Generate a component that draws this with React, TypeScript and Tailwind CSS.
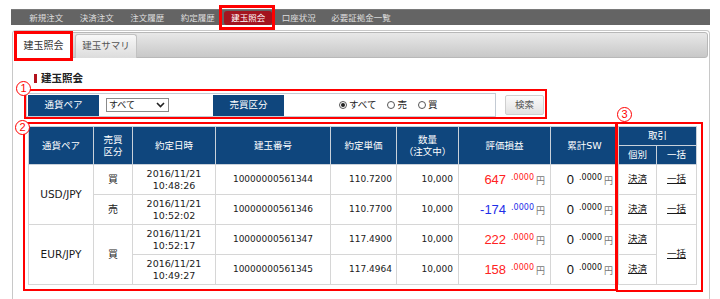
const navItems = ['新規注文', '決済注文', '注文履歴', '約定履歴', '建玉照会', '口座状況', '必要証拠金一覧'];

type Row = {
  pair?: string;
  pairSpan?: number;
  side?: string;
  sideSpan?: number;
  time: string;
  id: string;
  price: string;
  pl: string;
  plColor: string;
  bulk?: boolean;
  bulkSpan?: number;
};

const rows: Row[] = [
  { pair: 'USD/JPY', pairSpan: 2, side: '買', time: '10:48:26', id: '10000000561344', price: '110.7200', pl: '647', plColor: 'text-[#ff2222]', bulk: true },
  { side: '売', time: '10:52:02', id: '10000000561346', price: '110.7700', pl: '-174', plColor: 'text-[#1f2fe8]', bulk: true },
  { pair: 'EUR/JPY', pairSpan: 2, side: '買', sideSpan: 2, time: '10:52:17', id: '10000000561347', price: '117.4900', pl: '222', plColor: 'text-[#ff2222]', bulk: true, bulkSpan: 2 },
  { time: '10:49:27', id: '10000000561345', price: '117.4964', pl: '158', plColor: 'text-[#ff2222]' },
];

// annotation marks (①②③) that sit on top of the screen
const Circle = ({ n, className }: { n: string; className: string }) => (
  <span
    className={`absolute flex h-[15px] w-[15px] items-center justify-center rounded-full border-[1.5px] border-[#f00] bg-white font-['Liberation_Sans',sans-serif] text-[11px] leading-none text-[#f00] ${className}`}
  >
    {n}
  </span>
);

const Amount = ({ value, color }: { value: string; color: string }) => (
  <span className="whitespace-nowrap">
    <span className={`font-['Liberation_Sans',sans-serif] text-[13px] ${color}`}>{value}</span>
    <span className={`ml-[5px] align-super text-[8px] ${color}`}>.0000</span>
    <span className="ml-[2px] text-[9px] text-[#777]">円</span>
  </span>
);

const th = 'border border-[#c9d1da] bg-[#0f467d] text-center font-normal text-white';
const td = 'border border-[#d6d6d6] text-[#1a1a1a]';

const Radio = ({ checked, label }: { checked?: boolean; label: string }) => (
  <span className="flex items-center">
    <span className="flex h-[8px] w-[8px] items-center justify-center rounded-full border border-[#555] bg-white">
      {checked && <span className="h-[4px] w-[4px] rounded-full bg-[#222]" />}
    </span>
    <span className="ml-[2px] text-[9.5px] text-[#222]">{label}</span>
  </span>
);

export default function App() {
  return (
    <div className="h-[299px] w-[720px] overflow-hidden bg-white font-['DejaVu_Sans','Noto_Sans_CJK_JP',sans-serif]">
      <nav className="ml-[11px] mt-[9px] flex h-[16px] w-[699px] items-center border-t border-[#7a7a7a] bg-[#646464] pl-[10px]">
        {navItems.map((item, i) => (
          <div key={item} className={`flex justify-center ${i === 6 ? 'w-[74px]' : 'w-[50.5px]'}`}>
            <span
              className={`relative flex h-[14px] items-center rounded-[3px] px-[7px] font-['Noto_Sans_CJK_JP',sans-serif] text-[8.5px] ${
                i === 4 ? 'bg-[#a3141f] text-white' : 'text-[#dedede]'
              }`}
            >
              {item}
              {i === 4 && <span className="absolute -bottom-[5px] -left-[5px] -right-[3px] -top-[6px] border-[3px] border-[#f00]" />}
            </span>
          </div>
        ))}
      </nav>

      <div className="ml-[12px] mt-[5px] h-[280px] w-[698px] rounded-t-[4px] border border-b-0 border-[#c8c8c8] p-[1px]">
        <div className="flex h-[26px] items-end rounded-[3px] border border-[#b8b8b8] bg-linear-to-b from-[#e8e8e8] to-[#c8c8c8]">
          <div className="relative -mb-px -ml-px flex h-[26px] w-[59px] items-center justify-center rounded-t-[3px] border border-b-0 border-[#bcbcbc] bg-white text-[10px] text-[#333]">
            建玉照会
            <span className="absolute -bottom-[3px] -left-px -right-px -top-[2px] border-[3px] border-[#f00]" />
          </div>
          <div className="-mb-px ml-[2px] flex h-[24px] w-[62px] items-center justify-center rounded-t-[3px] border border-b-0 border-[#c2c2c2] bg-linear-to-b from-[#f8f8f8] to-[#dcdcdc] text-[9.5px] text-[#555]">
            建玉サマリ
          </div>
        </div>

        <div className="ml-[20px] mt-[14px] flex items-center">
          <span className="h-[9px] w-[3px] bg-[#b3121c]" />
          <span className="ml-[4px] text-[10.5px] font-bold leading-[12px] text-[#222]">建玉照会</span>
        </div>

        <div className="relative ml-[12px] mt-[9px] flex w-[518px] items-center">
          <div className="flex h-[24px] w-[470px] items-center border border-[#c3cad3] px-px">
            <div className="flex h-[21px] w-[71px] items-center justify-center bg-[#0f467d] text-[9.5px] text-white">通貨ペア</div>
            <div className="ml-[7px] flex h-[14px] w-[63px] items-center justify-between border border-[#8a8a8a] bg-white pl-[2px] pr-[3px]">
              <span className="text-[9px] leading-none text-[#222]">すべて</span>
              <svg width="9" height="6" viewBox="0 0 9 6">
                <path d="M1 1 L4.5 4.5 L8 1" fill="none" stroke="#222" strokeWidth="1.6" />
              </svg>
            </div>
            <div className="ml-[44px] flex h-[21px] w-[71px] items-center justify-center bg-[#0f467d] text-[9.5px] text-white">売買区分</div>
            <div className="ml-[55px] flex items-center gap-[11px]">
              <Radio checked label="すべて" />
              <Radio label="売" />
              <Radio label="買" />
            </div>
          </div>
          <button className="ml-[9px] flex h-[20px] w-[39px] items-center justify-center rounded-[2px] border border-[#cfcfcf] bg-linear-to-b from-[#fbfbfb] to-[#e2e2e2] text-[9.5px] text-[#555]">
            検索
          </button>
          <span className="absolute -bottom-[2px] -left-[2px] -right-[3px] -top-[4px] border-2 border-[#f00]" />
          <Circle n="1" className="left-[-10px] top-[-12px]" />
        </div>

        <div className="relative ml-[14px] mt-[9px] w-[668px]">
          <table className="w-[668px] table-fixed border-collapse text-[9px]">
            <colgroup>
              <col className="w-[65px]" />
              <col className="w-[39px]" />
              <col className="w-[83px]" />
              <col className="w-[115px]" />
              <col className="w-[66px]" />
              <col className="w-[62px]" />
              <col className="w-[92px]" />
              <col className="w-[68px]" />
              <col className="w-[38px]" />
              <col className="w-[40px]" />
            </colgroup>
            <thead className="text-[9.5px] leading-[12px]">
              <tr className="h-[19px]">
                <th rowSpan={2} className={th}>通貨ペア</th>
                <th rowSpan={2} className={th}>売買<br />区分</th>
                <th rowSpan={2} className={th}>約定日時</th>
                <th rowSpan={2} className={th}>建玉番号</th>
                <th rowSpan={2} className={th}>約定単価</th>
                <th rowSpan={2} className={th}>数量<br />（注文中）</th>
                <th rowSpan={2} className={th}>評価損益</th>
                <th rowSpan={2} className={th}>累計SW</th>
                <th colSpan={2} className={th}>取引</th>
              </tr>
              <tr className="h-[19px]">
                <th className={th}>個別</th>
                <th className={th}>一括</th>
              </tr>
            </thead>
            <tbody>
              {rows.map((r) => (
                <tr key={r.id} className="h-[30px]">
                  {r.pair && (
                    <td rowSpan={r.pairSpan} className={`${td} text-center text-[10.5px]`}>{r.pair}</td>
                  )}
                  {r.side && (
                    <td rowSpan={r.sideSpan} className={`${td} text-center text-[10px]`}>{r.side}</td>
                  )}
                  <td className={`${td} text-center text-[9.5px] leading-[12px]`}>
                    2016/11/21
                    <br />
                    {r.time}
                  </td>
                  <td className={`${td} text-center`}>{r.id}</td>
                  <td className={`${td} pr-[4px] text-right`}>{r.price}</td>
                  <td className={`${td} pr-[5px] text-right`}>10,000</td>
                  <td className={`${td} pr-[5px] text-right`}>
                    <Amount value={r.pl} color={r.plColor} />
                  </td>
                  <td className={`${td} pr-[5px] text-right`}>
                    <Amount value="0" color="text-[#111]" />
                  </td>
                  <td className={`${td} text-center text-[9.5px]`}>
                    <span className="underline">決済</span>
                  </td>
                  {r.bulk && (
                    <td rowSpan={r.bulkSpan} className={`${td} text-center text-[9.5px]`}>
                      <span className="underline">一括</span>
                    </td>
                  )}
                </tr>
              ))}
            </tbody>
          </table>
          <span className="absolute -bottom-[6px] -left-[5px] -top-[4px] w-[594px] border-2 border-[#f00]" />
          <span className="absolute -bottom-[7px] -right-[7px] -top-[4px] left-[588px] border-2 border-[#f00]" />
          <Circle n="2" className="left-[-13px] top-[-6px]" />
          <Circle n="3" className="left-[589px] top-[-19px]" />
        </div>
      </div>
    </div>
  );
}
